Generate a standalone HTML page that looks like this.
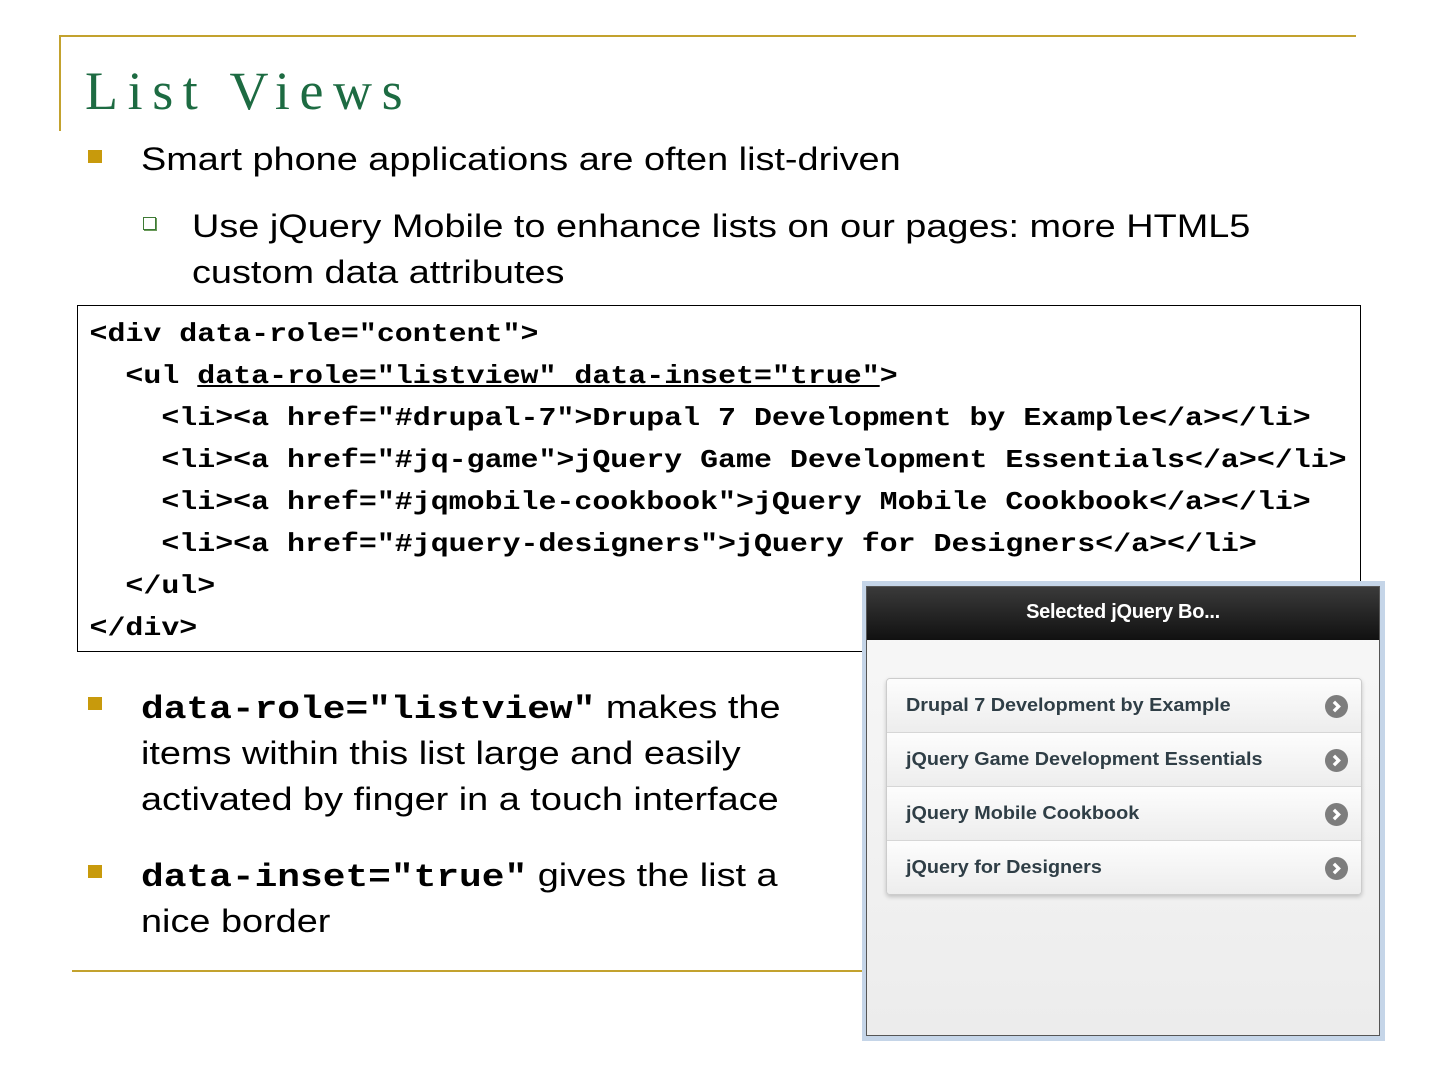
<!DOCTYPE html>
<html><head><style>
body{margin:0;width:1440px;height:1080px;background:#fff;position:relative;overflow:hidden;font-family:"Liberation Sans",Arial,sans-serif;color:#000}
.a{position:absolute}
.t{font-family:"Liberation Serif",serif;font-size:54px;color:#1d6b42;left:85px;top:58px;line-height:66px;letter-spacing:9.6px}
.txt{font-size:32px;line-height:46px;white-space:nowrap;transform:scaleX(1.183);transform-origin:0 0}
.sq{width:14px;height:13px;background:#c89a0c}
.hs{width:11px;height:11px;border:1.5px solid #3d7a35;box-shadow:1px 1px 0 #6a9a5a}
.code{left:77px;top:305px;width:1284px;height:347px;border:1px solid #000;box-sizing:border-box}
.ci{font-family:"Liberation Mono",monospace;font-weight:bold;font-size:26px;line-height:42px;white-space:pre;padding:7px 0 0 10px;transform:scaleX(1.151);transform-origin:0 0}
.mc{font-family:"Liberation Mono",monospace;font-weight:bold;font-size:32px;letter-spacing:0;line-height:0}
.row{height:53px;border-top:1px solid #d6d6d6;background:linear-gradient(#fdfdfd,#ededed);position:relative;font-weight:bold;font-size:18px;color:#2f3e46;line-height:53px;padding-left:19px}
.row:first-child{border-top:none}
.row span{display:inline-block;transform:scaleX(1.1);transform-origin:0 0}
.row svg{position:absolute;right:13px;top:16px}
</style></head><body>
<div class="a" style="left:60px;top:35px;width:1296px;height:2px;background:#c3a22e"></div>
<div class="a" style="left:59px;top:35px;width:2px;height:96px;background:#c3a22e"></div>
<div class="a t">List Views</div>
<div class="a sq" style="left:88px;top:150px"></div>
<div class="a txt" style="left:141px;top:136px">Smart phone applications are often list-driven</div>
<div class="a hs" style="left:143px;top:217px"></div>
<div class="a txt" style="left:192px;top:203px">Use jQuery Mobile to enhance lists on our pages: more HTML5<br>custom data attributes</div>
<div class="a code"><div class="ci">&lt;div data-role="content"&gt;
  &lt;ul <u>data-role="listview" data-inset="true"</u>&gt;
    &lt;li&gt;&lt;a href="#drupal-7"&gt;Drupal 7 Development by Example&lt;/a&gt;&lt;/li&gt;
    &lt;li&gt;&lt;a href="#jq-game"&gt;jQuery Game Development Essentials&lt;/a&gt;&lt;/li&gt;
    &lt;li&gt;&lt;a href="#jqmobile-cookbook"&gt;jQuery Mobile Cookbook&lt;/a&gt;&lt;/li&gt;
    &lt;li&gt;&lt;a href="#jquery-designers"&gt;jQuery for Designers&lt;/a&gt;&lt;/li&gt;
  &lt;/ul&gt;
&lt;/div&gt;</div></div>
<div class="a sq" style="left:88px;top:697px"></div>
<div class="a txt" style="left:141px;top:684px"><span class="mc">data-role="listview"</span> makes the<br>items within this list large and easily<br>activated by finger in a touch interface</div>
<div class="a sq" style="left:88px;top:865px"></div>
<div class="a txt" style="left:141px;top:852px"><span class="mc">data-inset="true"</span> gives the list a<br>nice border</div>
<div class="a" style="left:72px;top:970px;width:790px;height:2px;background:#c3a22e"></div>
<div class="a" style="left:862px;top:581px;width:523px;height:460px;background:#c5d5e8"></div>
<div class="a" style="left:866px;top:586px;width:514px;height:450px;border:1px solid #555;box-sizing:border-box;background:linear-gradient(#f8f8f8,#ececec)"></div>
<div class="a" style="left:867px;top:587px;width:512px;height:53px;background:linear-gradient(#3a3a3a,#111);color:#fff;font-weight:bold;font-size:20px;text-align:center;line-height:50px;letter-spacing:-0.3px">Selected jQuery Bo...</div>
<div class="a" style="left:886px;top:678px;width:474px;border:1px solid #ccc;border-radius:4px;box-shadow:0 2px 4px rgba(0,0,0,.2);overflow:hidden">
<div class="row"><span>Drupal 7 Development by Example</span><svg width="23" height="23" viewBox="0 0 22 22"><circle cx="11" cy="11" r="11" fill="#7d7d7d"/><path d="M8.5 6.5L13 11L8.5 15.5" stroke="#fff" stroke-width="3.2" fill="none"/></svg></div>
<div class="row"><span>jQuery Game Development Essentials</span><svg width="23" height="23" viewBox="0 0 22 22"><circle cx="11" cy="11" r="11" fill="#7d7d7d"/><path d="M8.5 6.5L13 11L8.5 15.5" stroke="#fff" stroke-width="3.2" fill="none"/></svg></div>
<div class="row"><span>jQuery Mobile Cookbook</span><svg width="23" height="23" viewBox="0 0 22 22"><circle cx="11" cy="11" r="11" fill="#7d7d7d"/><path d="M8.5 6.5L13 11L8.5 15.5" stroke="#fff" stroke-width="3.2" fill="none"/></svg></div>
<div class="row"><span>jQuery for Designers</span><svg width="23" height="23" viewBox="0 0 22 22"><circle cx="11" cy="11" r="11" fill="#7d7d7d"/><path d="M8.5 6.5L13 11L8.5 15.5" stroke="#fff" stroke-width="3.2" fill="none"/></svg></div>
</div>
</body></html>
